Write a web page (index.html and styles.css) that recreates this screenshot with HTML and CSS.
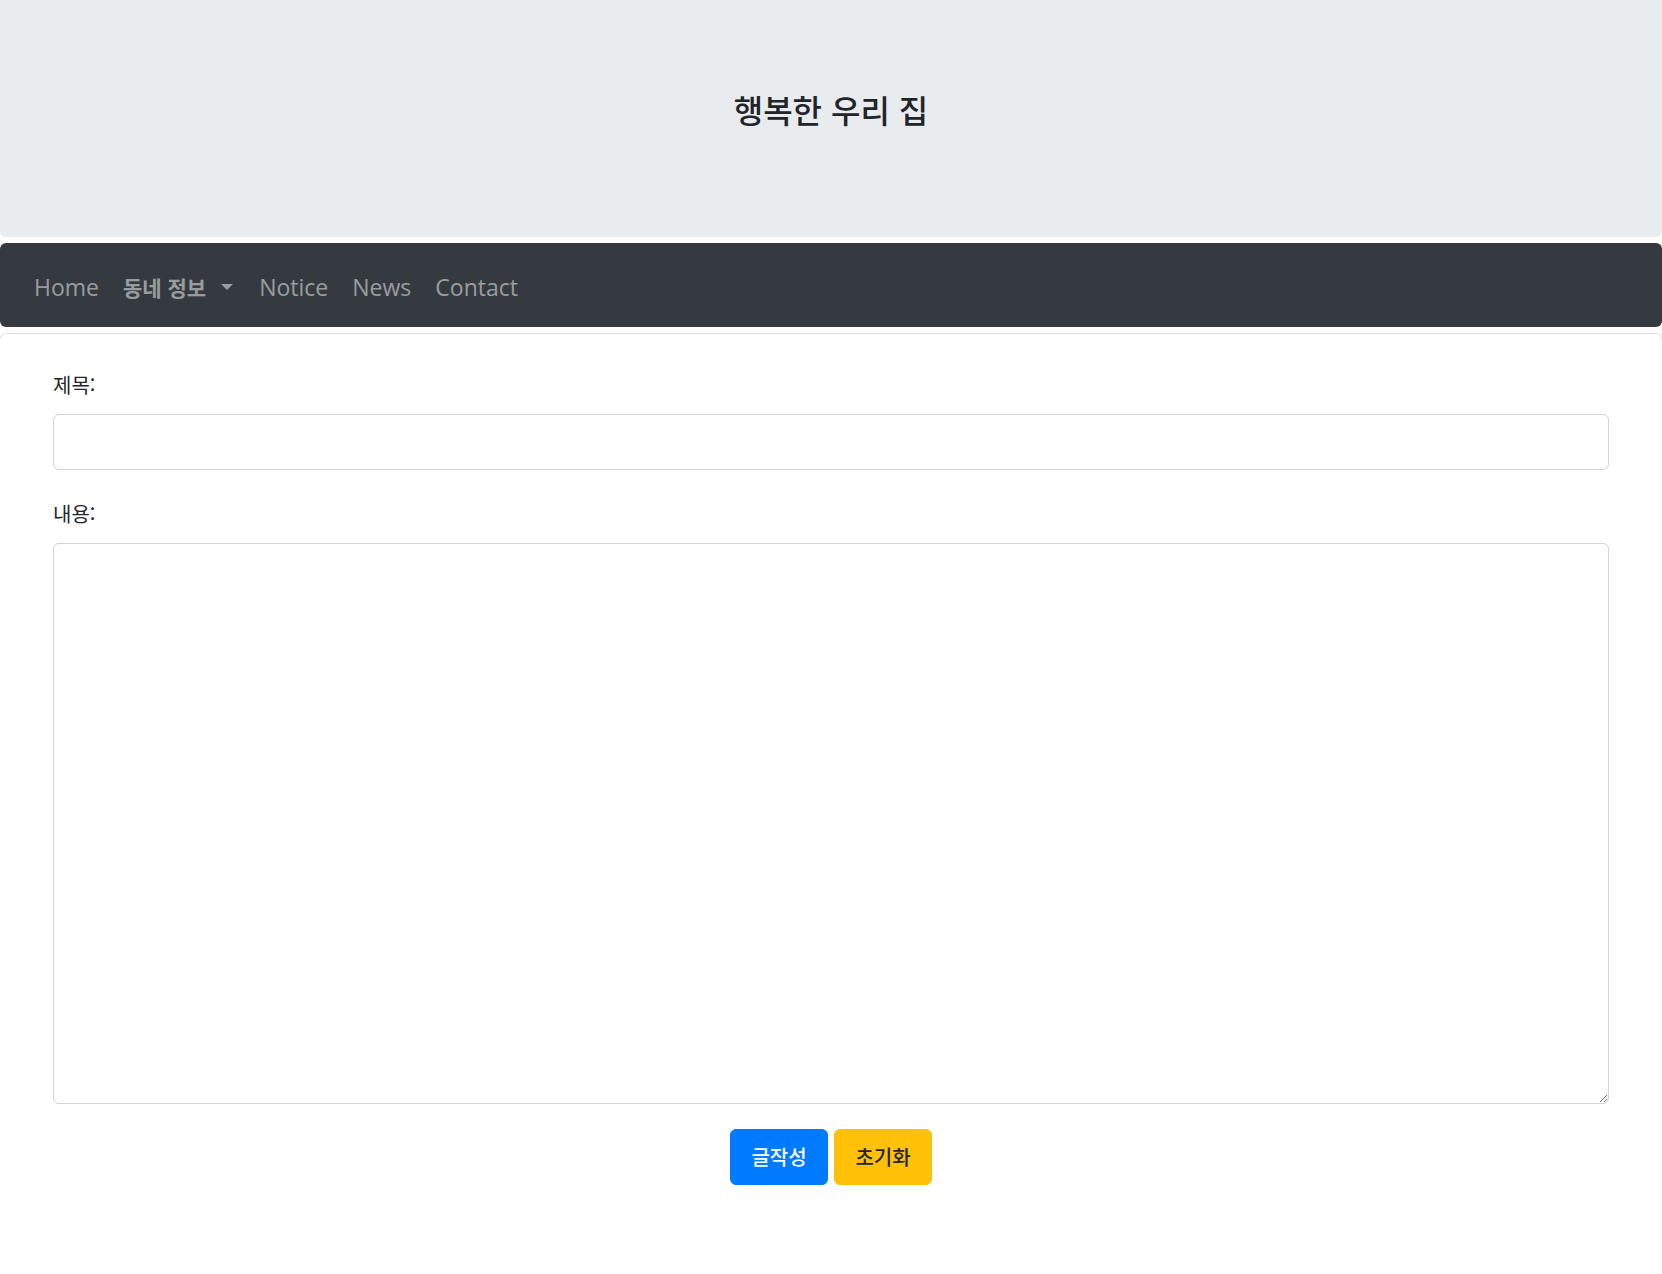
FILE: index.html
```html
<!DOCTYPE html>
<html lang="ko">
<head>
<meta charset="utf-8">
<title>행복한 우리 집</title>
<link rel="stylesheet" href="styles.css">
</head>
<body>
<header class="jumbotron">
  <h1 class="site-title">행복한 우리 집</h1>
</header>
<nav class="navbar">
  <a class="nav-link" href="#">Home</a>
  <a class="nav-link dropdown-toggle" href="#"><span class="ko">동네 정보</span></a>
  <a class="nav-link" href="#">Notice</a>
  <a class="nav-link" href="#">News</a>
  <a class="nav-link" href="#">Contact</a>
</nav>
<div class="divider"></div>
<main class="content">
  <form class="write-form">
    <div class="form-group">
      <label class="form-label" for="title">제목:</label>
      <input class="form-control" type="text" id="title">
    </div>
    <div class="form-group">
      <label class="form-label" for="content">내용:</label>
      <textarea class="form-control textarea" id="content"></textarea>
    </div>
    <div class="actions">
      <button type="submit" class="btn btn-primary">글작성</button>
      <button type="reset" class="btn btn-warning">초기화</button>
    </div>
  </form>
</main>
</body>
</html>
```
FILE: styles.css
```css
* {
  box-sizing: border-box;
}

body {
  margin: 0;
  font-family: "Open Sans", "Noto Sans CJK KR", sans-serif;
  color: #212529;
  background: #fff;
}

.jumbotron {
  height: 237px;
  background: #e9ecef;
  border-radius: 0 0 6px 6px;
  padding-top: 90px;
  display: flex;
  flex-direction: column;
  align-items: center;
}

.site-title {
  margin: 0;
  font-family: "Noto Sans CJK KR", sans-serif;
  font-size: 32px;
  font-weight: 500;
  line-height: 1.2;
  color: #212529;
}

.navbar {
  margin-top: 6px;
  height: 84px;
  background: #343a40;
  border-radius: 6px;
  display: flex;
  align-items: center;
  padding: 3px 22px 0;
}

.nav-link {
  color: rgba(255, 255, 255, 0.5);
  text-decoration: none;
  font-size: 23px;
  line-height: 32px;
  padding: 0 12px;
  display: flex;
  align-items: center;
}

.ko {
  font-family: "Noto Sans CJK KR", sans-serif;
  font-size: 21px;
  font-weight: 700;
}

.dropdown-toggle::after {
  content: "";
  display: inline-block;
  margin-left: 15px;
  border-top: 6px solid;
  border-left: 6px solid transparent;
  border-right: 6px solid transparent;
}

.dropdown-toggle {
  margin-right: 2px;
}

.divider {
  margin-top: 6px;
  height: 6px;
  border: 1px solid rgba(0, 0, 0, 0.125);
  border-bottom: none;
  border-radius: 6px 6px 0 0;
}

.content {
  display: block;
  padding: 31px 53px 80px;
}

.form-group + .form-group {
  margin-top: 29px;
}

.form-label {
  display: block;
  font-family: "Noto Sans CJK KR", sans-serif;
  font-size: 20px;
  font-weight: 400;
  line-height: 30px;
  margin-bottom: 14px;
  color: #212529;
}

.form-control {
  display: block;
  width: 100%;
  height: 56px;
  border: 1px solid #ced4da;
  border-radius: 6px;
  background: #fff;
  font-family: "Open Sans", "Noto Sans CJK KR", sans-serif;
  font-size: 20px;
  padding: 8px 14px;
  color: #495057;
}

.textarea {
  height: 561px;
  resize: vertical;
}

.actions {
  margin-top: 25px;
  display: flex;
  justify-content: center;
  gap: 6px;
}

.btn {
  font-family: "Noto Sans CJK KR", sans-serif;
  font-size: 20px;
  font-weight: 500;
  line-height: 30px;
  padding: 12px 18px;
  width: 98px;
  border: 1px solid transparent;
  border-radius: 6px;
  cursor: pointer;
}

.btn-primary {
  background: #007bff;
  border-color: #007bff;
  color: #fff;
}

.btn-warning {
  background: #ffc107;
  border-color: #ffc107;
  color: #212529;
}
```
